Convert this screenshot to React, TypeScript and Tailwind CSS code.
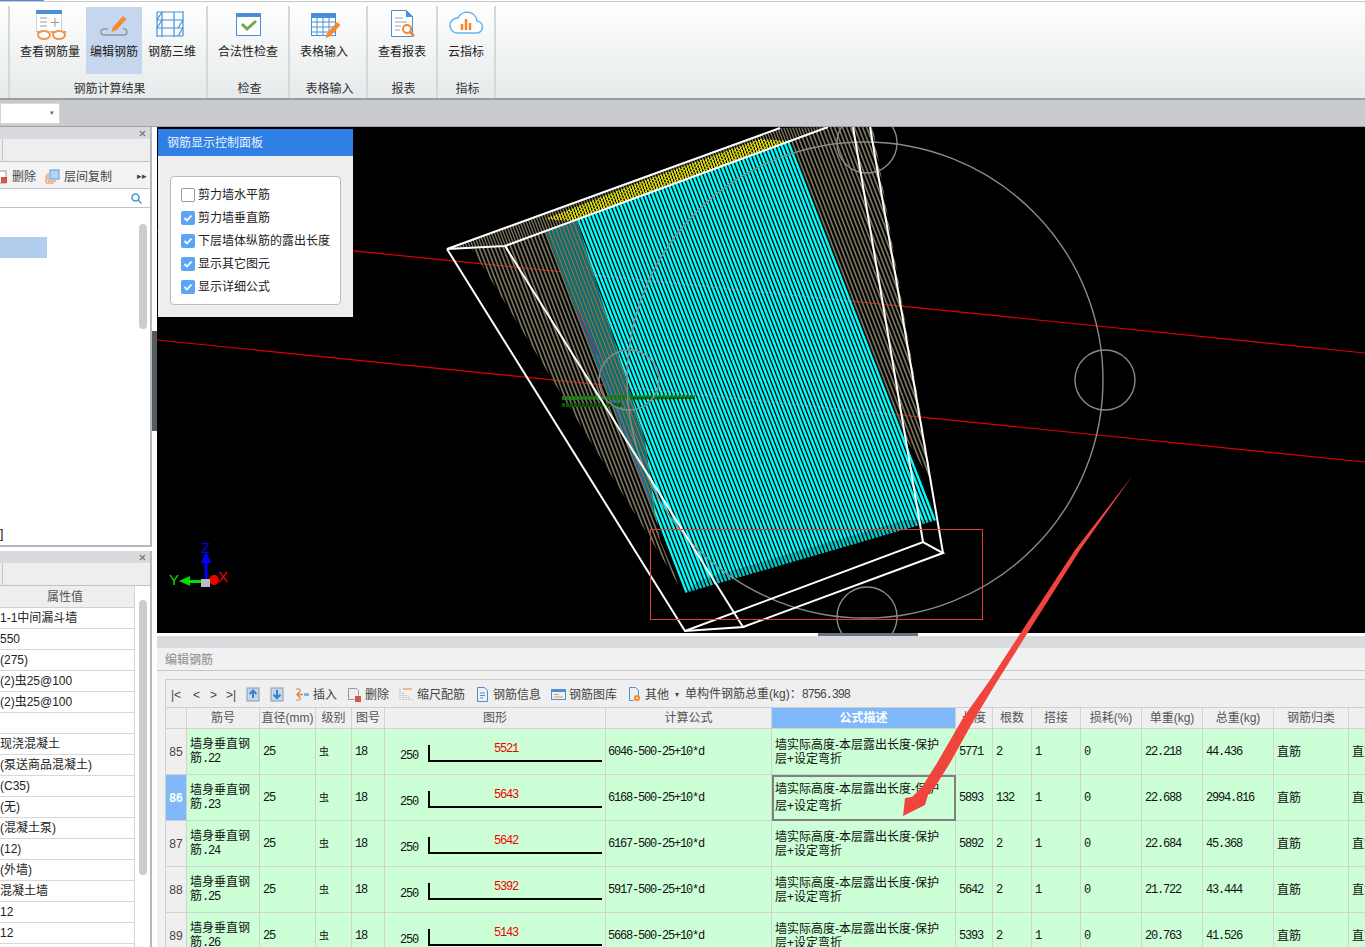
import React from 'react';
import { X } from 'lucide-react';

const MONO = "font-['Liberation_Mono',monospace] text-[12px] tracking-[-1.2px]";
const COLS = 'grid grid-cols-[21px_73px_56px_36px_33px_221px_166px_184px_37px_39px_49px_61px_61px_71px_75px_60px]';

const HEADERS = ['', '筋号', '直径(mm)', '级别', '图号', '图形', '计算公式', '公式描述', '长度', '根数', '搭接', '损耗(%)', '单重(kg)', '总重(kg)', '钢筋归类', '搭'];

const ROWS = [
  { no: 85, bar: 22, size: 5521, calc: 6046, len: 5771, count: 2, unit: '22.218', total: '44.436' },
  { no: 86, bar: 23, size: 5643, calc: 6168, len: 5893, count: 132, unit: '22.688', total: '2994.816' },
  { no: 87, bar: 24, size: 5642, calc: 6167, len: 5892, count: 2, unit: '22.684', total: '45.368' },
  { no: 88, bar: 25, size: 5392, calc: 5917, len: 5642, count: 2, unit: '21.722', total: '43.444' },
  { no: 89, bar: 26, size: 5143, calc: 5668, len: 5393, count: 2, unit: '20.763', total: '41.526' },
];

const PROPS = ['1-1中间漏斗墙', '550', '(275)', '(2)虫25@100', '(2)虫25@100', '', '现浇混凝土', '(泵送商品混凝土)', '(C35)', '(无)', '(混凝土泵)', '(12)', '(外墙)', '混凝土墙', '12', '12', ''];

const CHECKS = [
  { label: '剪力墙水平筋', on: false },
  { label: '剪力墙垂直筋', on: true },
  { label: '下层墙体纵筋的露出长度', on: true },
  { label: '显示其它图元', on: true },
  { label: '显示详细公式', on: true },
];

const Hatch = ({ id, poly, color, width = 2, spacing = 4, slope = 0.387, offset = 0 }: { id: string; poly: string; color: string; width?: number; spacing?: number; slope?: number; offset?: number }) => {
  const lines = Array.from({ length: Math.ceil(1300 / spacing) }, (_, i) => i * spacing + offset - 100);
  return (
    <g clipPath={`url(#${id})`}>
      <clipPath id={id}><polygon points={poly} /></clipPath>
      {lines.map(x => <line key={x} x1={x} y1={100} x2={x + slope * 540} y2={640} stroke={color} strokeWidth={width} />)}
    </g>
  );
};

const ModelView = () => (
  <svg className="absolute inset-0 h-full w-full" viewBox="157 127 1208 506">
    <line x1="157" y1="231" x2="1365" y2="353" stroke="#e00000" strokeWidth="1.2" />
    <line x1="157" y1="340" x2="1365" y2="462" stroke="#e00000" strokeWidth="1.2" />
    <Hatch id="strip" poly="447,249 780,128 828,127 505,246" color="#77725c" width={1.4} spacing={3} />
    <Hatch id="cyan" poly="546,231 790,141 937,520 685,593" color="#00ffff" width={2.4} />
    <polygon points="546,231 577,220 645,440 655,515" fill="#000" opacity="0.55" />
    <polygon points="700,580 905,520 937,520 685,593" fill="#000" opacity="0.2" />
    <Hatch id="tanl" poly="472,249 505,246 577,220 645,440 660,540 680,587" color="#7a755e" width={1.7} offset={2} />
    <Hatch id="tanr" poly="790,141 828,127 873,127 932,483 905,437" color="#7a755e" width={1.7} />
    <Hatch id="yel" poly="545,219 640,182 760,139 790,141 650,192 570,221" color="#f0f000" width={1.1} spacing={3} />
    <Hatch id="yel2" poly="545,219 640,182 760,139 790,141 650,192 570,221" color="#e0e000" width={1} spacing={4} slope={-0.9} />
    <line x1="578" y1="311" x2="597" y2="355" stroke="#8a1fa0" strokeWidth="1.3" />
    <line x1="597" y1="355" x2="650" y2="500" stroke="#5a5ad8" strokeWidth="0.8" />
    <line x1="562" y1="398" x2="695" y2="397" stroke="#0b7a0b" strokeWidth="4" strokeDasharray="3 1" />
    <line x1="562" y1="405" x2="622" y2="405" stroke="#075c07" strokeWidth="4" strokeDasharray="3 1" />
    <g fill="none" stroke="#8a8a8a" strokeWidth="1.4">
      <circle cx="865" cy="380" r="238" />
      <circle cx="867" cy="143" r="30" />
      <circle cx="629" cy="380" r="30" />
      <circle cx="1105" cy="380" r="30" />
      <circle cx="867" cy="617" r="30" />
    </g>
    <g fill="none" stroke="#fff" strokeWidth="2">
      <path d="M780 128L447 249L505 246L828 127" />
      <path d="M447 249L685 631L743 627L505 246" />
      <path d="M685 631L923 542L943 553L743 627" />
      <path d="M853 127L923 542" />
      <path d="M870 127L943 553" />
    </g>
    <rect x="650.5" y="529.5" width="332" height="90" fill="none" stroke="#e23b36" />
    <rect x="204.5" y="557" width="3" height="22" fill="#0000ff" />
    <polygon points="206,551 201,563 211,563" fill="#0000ff" />
    <rect x="186" y="580" width="19" height="3" fill="#00e000" />
    <polygon points="179,581 190,576 190,586" fill="#00e000" />
    <circle cx="214" cy="580" r="5" fill="#f00000" />
    <rect x="201" y="579" width="9" height="8" fill="#bdbdbd" />
    <text x="201" y="553" fill="#0000ff" fontSize="15" fontFamily="Liberation Sans">Z</text>
    <text x="169" y="585" fill="#00e000" fontSize="15" fontFamily="Liberation Sans">Y</text>
    <text x="218" y="582" fill="#f00000" fontSize="15" fontFamily="Liberation Sans">X</text>
  </svg>
);

const Pencil = ({ x, y }: { x: number; y: number }) => (
  <path d={`M${x} ${y}l10 -11l3.500 3l-10 11l-5 2z`} fill="#f58b2e" />
);

const RibbonIcon = ({ kind }: { kind: string }) => (
  <svg width="40" height="32" viewBox="0 0 40 32" fill="none">
    {kind === 'glasses' && (
      <g>
        <rect x="6.500" y="2.500" width="25" height="21" fill="#fff" stroke="#c8d4e4" />
        <rect x="6" y="2" width="26" height="4" fill="#4a90d9" />
        <path d="M10 10h7M10 14h7M10 18h7M25 10v9M21 14.500h8" stroke="#999" />
        <path d="M7 24h3M21 24h5M33 24h3" stroke="#f5954a" strokeWidth="2" />
        <ellipse cx="14" cy="27" rx="6" ry="4" stroke="#f5954a" strokeWidth="2" fill="#fff" />
        <ellipse cx="29" cy="27" rx="6" ry="4" stroke="#f5954a" strokeWidth="2" fill="#fff" />
      </g>
    )}
    {kind === 'edit' && (
      <g>
        <path d="M14 21h-4a3 3 0 0 0 0 6h20a3 3 0 0 0 0 -6h-1" stroke="#8f979f" strokeWidth="1.300" />
        <Pencil x={19} y={19} />
      </g>
    )}
    {kind === 'grid' && (
      <g stroke="#4a90d9" strokeWidth="1.200">
        <path d="M10 4v25M22 4v25M31 3v25M5 4v25" />
        <path d="M5 4h26M5 12h26M5 20h26M5 28h26M5 12l5 -8M5 20l5 -8M26 28l5 -8M26 20l5 -8" />
      </g>
    )}
    {kind === 'check' && (
      <g>
        <rect x="8.500" y="5.500" width="24" height="22" fill="#fff" stroke="#4a90d9" />
        <rect x="8" y="5" width="25" height="4" fill="#4a90d9" />
        <path d="M14 16l5 5l9 -8" stroke="#6fa84f" strokeWidth="3" />
      </g>
    )}
    {kind === 'table' && (
      <g>
        <rect x="7.500" y="5.500" width="24" height="22" fill="#fff" stroke="#4a90d9" />
        <rect x="7" y="5" width="25" height="5" fill="#4a90d9" />
        <path d="M8 14h23M8 19h23M8 24h23M13 10v18M19 10v18M25 10v18" stroke="#4a90d9" />
        <Pencil x={23} y={25} />
      </g>
    )}
    {kind === 'report' && (
      <g>
        <path d="M9.500 2.500h15l6 6v20h-21z" fill="#fff" stroke="#4a90d9" />
        <path d="M24 2l7 7h-7z" fill="#4a90d9" />
        <path d="M13 10h8M13 14h12M13 18h6M13 22h5" stroke="#9aa0a6" />
        <circle cx="25" cy="21" r="4" fill="#fff" stroke="#f0852d" strokeWidth="2" />
        <path d="M28 24l4 4" stroke="#f0852d" strokeWidth="2.500" />
      </g>
    )}
    {kind === 'cloud' && (
      <g>
        <path d="M11 25h19a6 6 0 0 0 1 -12a10 10 0 0 0 -19 -3a7.500 7.500 0 0 0 -1 15z" stroke="#66b3ee" strokeWidth="1.500" fill="#fff" />
        <path d="M16 16v6M20 11v11M24 15v7" stroke="#f0852d" strokeWidth="2.500" />
      </g>
    )}
  </svg>
);

const RibbonItem = ({ kind, label, active, className }: { kind: string; label: string; active?: boolean; className: string }) => (
  <div className={`flex h-[67px] flex-col items-center ${active ? 'bg-[#c5d6ee]' : ''} ${className}`}>
    <div className="flex h-[33px] items-end justify-center"><RibbonIcon kind={kind} /></div>
    <span className="mt-[3px] whitespace-nowrap">{label}</span>
  </div>
);

const RibbonGroup = ({ label, className, children }: { label: string; className: string; children: React.ReactNode }) => (
  <div className={`flex h-[92px] flex-col border-r-2 border-[#d5d8d8] ${className}`}>
    <div className="flex h-[71px] pt-[1px]">{children}</div>
    <div className="mt-[5px] pl-[3px] text-center text-[#333]">{label}</div>
  </div>
);

const Ribbon = () => (
  <div className="flex h-[96px] bg-gradient-to-b from-[#ffffff] to-[#e6eaea] pt-[4px] text-[#222]">
    <div className="w-[10px] border-r-2 border-[#d5d8d8]" />
    <RibbonGroup label="钢筋计算结果" className="w-[198px]">
      <RibbonItem kind="glasses" label="查看钢筋量" className="ml-[4px] w-[72px]" />
      <RibbonItem kind="edit" label="编辑钢筋" active className="w-[56px]" />
      <RibbonItem kind="grid" label="钢筋三维" className="w-[60px]" />
    </RibbonGroup>
    <RibbonGroup label="检查" className="w-[82px]">
      <RibbonItem kind="check" label="合法性检查" className="w-[80px]" />
    </RibbonGroup>
    <RibbonGroup label="表格输入" className="w-[78px]">
      <RibbonItem kind="table" label="表格输入" className="w-[68px]" />
    </RibbonGroup>
    <RibbonGroup label="报表" className="w-[70px]">
      <RibbonItem kind="report" label="查看报表" className="w-[68px]" />
    </RibbonGroup>
    <RibbonGroup label="指标" className="w-[58px]">
      <RibbonItem kind="cloud" label="云指标" className="w-[56px]" />
    </RibbonGroup>
  </div>
);

const PanelHead = () => (
  <div className="flex h-[12px] shrink-0 items-center justify-end bg-[#d9dadd] pr-[3px]">
    <X size={9} strokeWidth={3} className="text-[#777]" />
  </div>
);

const PanelTabs = () => (
  <div className="h-[23px] shrink-0 border-b border-[#bfc3c7] bg-[#eeeeee]">
    <div className="h-full w-[3px] border-r border-[#c4c4c4]" />
  </div>
);

const LeftPanels = () => (
  <div className="flex w-[152px] flex-col bg-white">
    <div className="flex h-[420px] shrink-0 flex-col border-r-2 border-b-2 border-[#b8b8b8]">
      <PanelHead />
      <PanelTabs />
      <div className="flex h-[27px] shrink-0 items-center border-b border-[#bfc3c7] bg-[#f3f3f3] pt-[3px] text-[#444]">
        <svg width="8" height="14" viewBox="0 0 8 14"><rect x="-6" y="1" width="12" height="12" fill="#fff" stroke="#999" /><rect x="1" y="7" width="6" height="6" fill="#d9534f" /></svg>
        <span className="ml-[4px]">删除</span>
        <svg className="ml-[9px]" width="15" height="15" viewBox="0 0 15 15" fill="none"><path d="M1 6v8h8M3 4v8h8" stroke="#e08a4a" /><rect x="5" y="1" width="9" height="9" fill="#b5d3f5" stroke="#5b9bd5" /></svg>
        <span className="ml-[4px]">层间复制</span>
        <span className="ml-auto mr-[3px] text-[9px]">▸▸</span>
      </div>
      <div className="flex h-[19px] shrink-0 items-center justify-end border-b border-[#bfc3c7] pr-[8px]">
        <svg width="11" height="11" viewBox="0 0 11 11" fill="none"><circle cx="4.500" cy="4.500" r="3.500" stroke="#3f9bd0" strokeWidth="1.500" /><path d="M7 7l3.500 3.500" stroke="#3f9bd0" strokeWidth="1.500" /></svg>
      </div>
      <div className="relative flex-1 overflow-hidden">
        <div className="mt-[29px] h-[21px] w-[47px] bg-[#b3cdee]" />
        <div className="absolute right-[3px] top-[16px] h-[105px] w-[8px] rounded bg-[#cccccc]" />
        <div className="absolute bottom-[2px] left-0">]</div>
      </div>
    </div>
    <div className="mt-[4px] flex min-h-0 flex-1 flex-col overflow-hidden border-r-2 border-[#b8b8b8]">
      <PanelHead />
      <PanelTabs />
      <div className="relative flex min-h-0 flex-1">
        <div className="w-[135px] border-r border-[#d4d4d4]">
          <div className="flex h-[22px] items-center justify-center border-b border-[#cfcfcf] bg-[#eeeeee] pr-[4px] text-[#555]">属性值</div>
          {PROPS.map((value, i) => (
            <div key={i} className="h-[21px] border-b border-[#d8d8d8] leading-[20px] whitespace-nowrap text-[#222]">{value}</div>
          ))}
        </div>
        <div className="absolute right-[3px] top-[14px] h-[275px] w-[8px] rounded bg-[#cccccc]" />
      </div>
    </div>
  </div>
);

const Splitter = () => (
  <div className="w-[5px] bg-white">
    <div className="mt-[204px] h-[100px] bg-[#555b63]" />
  </div>
);

const ControlPanel = () => (
  <div className="absolute left-[1px] top-[2px] flex h-[188px] w-[195px] flex-col bg-[#eeeeee]">
    <div className="flex h-[27px] items-center bg-[#2f80e4] pl-[9px] text-[#eaf2fd]">钢筋显示控制面板</div>
    <div className="mx-[12px] mt-[20px] flex h-[129px] flex-col justify-center rounded border border-[#bbbbbb] bg-white pl-[10px]">
      {CHECKS.map(item => (
        <div key={item.label} className="flex h-[23px] items-center gap-[3px] text-[#222]">
          {item.on ? (
            <span className="flex h-[14px] w-[14px] items-center justify-center rounded-[2px] bg-[#5aa5f5]">
              <svg width="10" height="10" viewBox="0 0 10 10" fill="none"><path d="M1.500 5l2.500 2.500l4.500 -5" stroke="#fff" strokeWidth="1.800" /></svg>
            </span>
          ) : (
            <span className="h-[14px] w-[14px] rounded-[2px] border border-[#999]" />
          )}
          <span className="whitespace-nowrap">{item.label}</span>
        </div>
      ))}
    </div>
  </div>
);

const ToolIcon = ({ kind }: { kind: string }) => (
  <svg width="15" height="15" viewBox="0 0 15 15" fill="none">
    {kind === 'up' && <g><rect x="1" y="1" width="12" height="13" fill="#c9d6e4" stroke="#8a9bad" /><path d="M7 11V4M3.500 7L7 3.500L10.500 7" stroke="#2f80e4" strokeWidth="2" /></g>}
    {kind === 'down' && <g><rect x="1" y="1" width="12" height="13" fill="#c9d6e4" stroke="#8a9bad" /><path d="M7 3v7M3.500 7.500L7 11l3.500 -3.500" stroke="#2f80e4" strokeWidth="2" /></g>}
    {kind === 'insert' && <g><path d="M1 2h4v3M1 13h4v-3" stroke="#999" /><path d="M2 7.500h6M5 4.500l-3 3l3 3" stroke="#f0852d" strokeWidth="1.500" /><rect x="9" y="6" width="5" height="3" fill="#7fb2e8" /></g>}
    {kind === 'delete' && <g><path d="M1.500 1.500h8l2 2v5M1.500 1.500v11h6" stroke="#999" /><rect x="8" y="9" width="6" height="6" fill="#d9534f" /></g>}
    {kind === 'scale' && <g><path d="M1 2v12M4 6v8M7 8v6M10 10v4M13 12v2" stroke="#999" strokeDasharray="1 1" /><path d="M4 2h9" stroke="#f0852d" /></g>}
    {kind === 'info' && <g><path d="M2.500 .5h7l3 3v11h-10z" stroke="#4a90d9" /><path d="M5 6h5M5 8.500h5M5 11h3" stroke="#4a90d9" /></g>}
    {kind === 'lib' && <g><rect x=".5" y="2.500" width="14" height="10" stroke="#4a90d9" /><rect x="1" y="3" width="13" height="2" fill="#4a90d9" /><path d="M3 7.500h5M3 10h9" stroke="#d8a24a" /></g>}
    {kind === 'other' && <g><path d="M2.500 .5h6l3 3v5M2.500 .5v13h4" stroke="#4a90d9" /><circle cx="10" cy="11" r="3" fill="#f0852d" /><circle cx="10" cy="11" r="1" fill="#fff" /></g>}
  </svg>
);

const ToolButton = ({ kind, label, className }: { kind: string; label: string; className: string }) => (
  <div className={`flex items-center gap-[3px] whitespace-nowrap text-[#444] ${className}`}>
    <ToolIcon kind={kind} />
    <span>{label}</span>
  </div>
);

const TableToolbar = () => (
  <div className="flex h-[27px] items-center bg-[#efefef] pl-[5px] pt-[2px] text-[#444]">
    <span className="w-[22px]">|&lt;</span>
    <span className="w-[17px]">&lt;</span>
    <span className="w-[16px]">&gt;</span>
    <span className="w-[20px]">&gt;|</span>
    <ToolIcon kind="up" />
    <span className="ml-[9px]"><ToolIcon kind="down" /></span>
    <ToolButton kind="insert" label="插入" className="ml-[10px]" />
    <ToolButton kind="delete" label="删除" className="ml-[10px]" />
    <ToolButton kind="scale" label="缩尺配筋" className="ml-[10px]" />
    <ToolButton kind="info" label="钢筋信息" className="ml-[10px]" />
    <ToolButton kind="lib" label="钢筋图库" className="ml-[10px]" />
    <ToolButton kind="other" label="其他" className="ml-[10px]" />
    <span className="ml-[6px] text-[8px]">▾</span>
    <span className="ml-[6px] whitespace-nowrap">单构件钢筋总重(kg)：<span className={MONO}>8756.398</span></span>
  </div>
);

const Cell = ({ className = '', children }: { className?: string; children?: React.ReactNode }) => (
  <div className={`flex items-center overflow-hidden whitespace-nowrap border-r border-b border-[#d2d2d2] pl-[3px] ${className}`}>{children}</div>
);

const BarRow = ({ row }: { row: (typeof ROWS)[number] }) => {
  const selected = row.no === 86;
  return (
    <div className={`${COLS} h-[46px] bg-[#ccffd6] text-[#111]`}>
      <Cell className={`justify-center !pl-0 ${selected ? 'bg-[#80b8f8] font-bold text-white' : 'bg-[#efefef] text-[#444]'}`}>{row.no}</Cell>
      <Cell className="leading-[14px]">
        <span className="whitespace-normal">墙身垂直钢筋<span className={MONO}>.{row.bar}</span></span>
      </Cell>
      <Cell className={MONO}>25</Cell>
      <Cell className="text-[10px]">虫</Cell>
      <Cell className={MONO}>18</Cell>
      <Cell className="items-start pt-[16px] !pl-[15px]">
        <span className={`mt-[2px] w-[28px] ${MONO}`}>250</span>
        <div className="h-[17px] w-[174px] border-b-2 border-l-2 border-black pl-[64px] text-left leading-[4px] text-[#f00000]">
          <span className={`relative top-[1px] ${MONO}`}>{row.size}</span>
        </div>
      </Cell>
      <Cell className={`!pl-[2px] ${MONO}`}>{row.calc}-500-25+10*d</Cell>
      <Cell className={`leading-[14px] ${selected ? '!border-2 !border-[#808080] !pl-[1px] !leading-[17px]' : ''}`}>
        <span>墙实际高度-本层露出长度-保护<br />层+设定弯折</span>
      </Cell>
      <Cell className={MONO}>{row.len}</Cell>
      <Cell className={MONO}>{row.count}</Cell>
      <Cell className={MONO}>1</Cell>
      <Cell className={MONO}>0</Cell>
      <Cell className={MONO}>{row.unit}</Cell>
      <Cell className={MONO}>{row.total}</Cell>
      <Cell>直筋</Cell>
      <Cell>直筋</Cell>
    </div>
  );
};

const BarTable = () => (
  <div className="ml-[8px] mt-[8px] min-h-0 flex-1 overflow-hidden border-l border-t border-[#cfcfcf]">
    <TableToolbar />
    <div className={`${COLS} h-[22px] border-t border-[#cfcfcf] bg-[#efefef] text-[#555]`}>
      {HEADERS.map(title => (
        <div key={title} className={`flex items-center justify-center overflow-hidden whitespace-nowrap border-r border-b border-[#d2d2d2] ${title === '公式描述' ? 'bg-[#7fb9fb] font-bold text-white' : ''}`}>{title}</div>
      ))}
    </div>
    {ROWS.map(row => <BarRow key={row.no} row={row} />)}
  </div>
);

const EditPanel = () => (
  <div className="flex min-h-0 flex-1 flex-col bg-[#f1f1f1]">
    <div className="h-[3px] bg-white">
      <div className="ml-[661px] h-[4px] w-[100px] bg-[#6b7280]" />
    </div>
    <div className="h-[12px] bg-[#d9dbde]" />
    <div className="flex h-[23px] items-center border-b border-[#c8c8c8] pl-[8px] pt-[2px] font-medium text-[#999]">编辑钢筋</div>
    <BarTable />
  </div>
);

const RedArrow = () => (
  <svg className="absolute inset-0 h-full w-full" viewBox="0 0 1365 947">
    <polygon points="1133,475 1080,550 1025,637 998,680 975,718 950,763 935,787 928,795 925,805 903,816 905,798 912,797 922,787 937,763 963,718 990,680 1018,637 1075,550" fill="#f0443c" />
  </svg>
);

const App: React.FC = () => (
  <div className="relative flex h-[947px] w-[1365px] flex-col overflow-hidden bg-white font-['Liberation_Sans','Noto_Sans_CJK_SC',sans-serif] text-[12px]">
    <div className="h-[2px] border-b border-[#c9c9c9]">
      <div className="h-[1px] w-[44px] bg-[#4a90d9]" />
    </div>
    <Ribbon />
    <div className="h-[2px] bg-[#9a9da0]" />
    <div className="h-[27px] border-b border-[#a0a2a5] bg-[#c8cacd] pt-[3px]">
      <div className="flex h-[21px] w-[60px] items-center justify-end border border-[#d8d8d8] bg-white pr-[5px] text-[7px] text-[#666]">▾</div>
    </div>
    <div className="flex min-h-0 flex-1">
      <LeftPanels />
      <Splitter />
      <div className="flex min-w-0 flex-1 flex-col">
        <div className="relative h-[506px] bg-black">
          <ModelView />
          <ControlPanel />
        </div>
        <EditPanel />
      </div>
    </div>
    <RedArrow />
  </div>
);

export default App;
